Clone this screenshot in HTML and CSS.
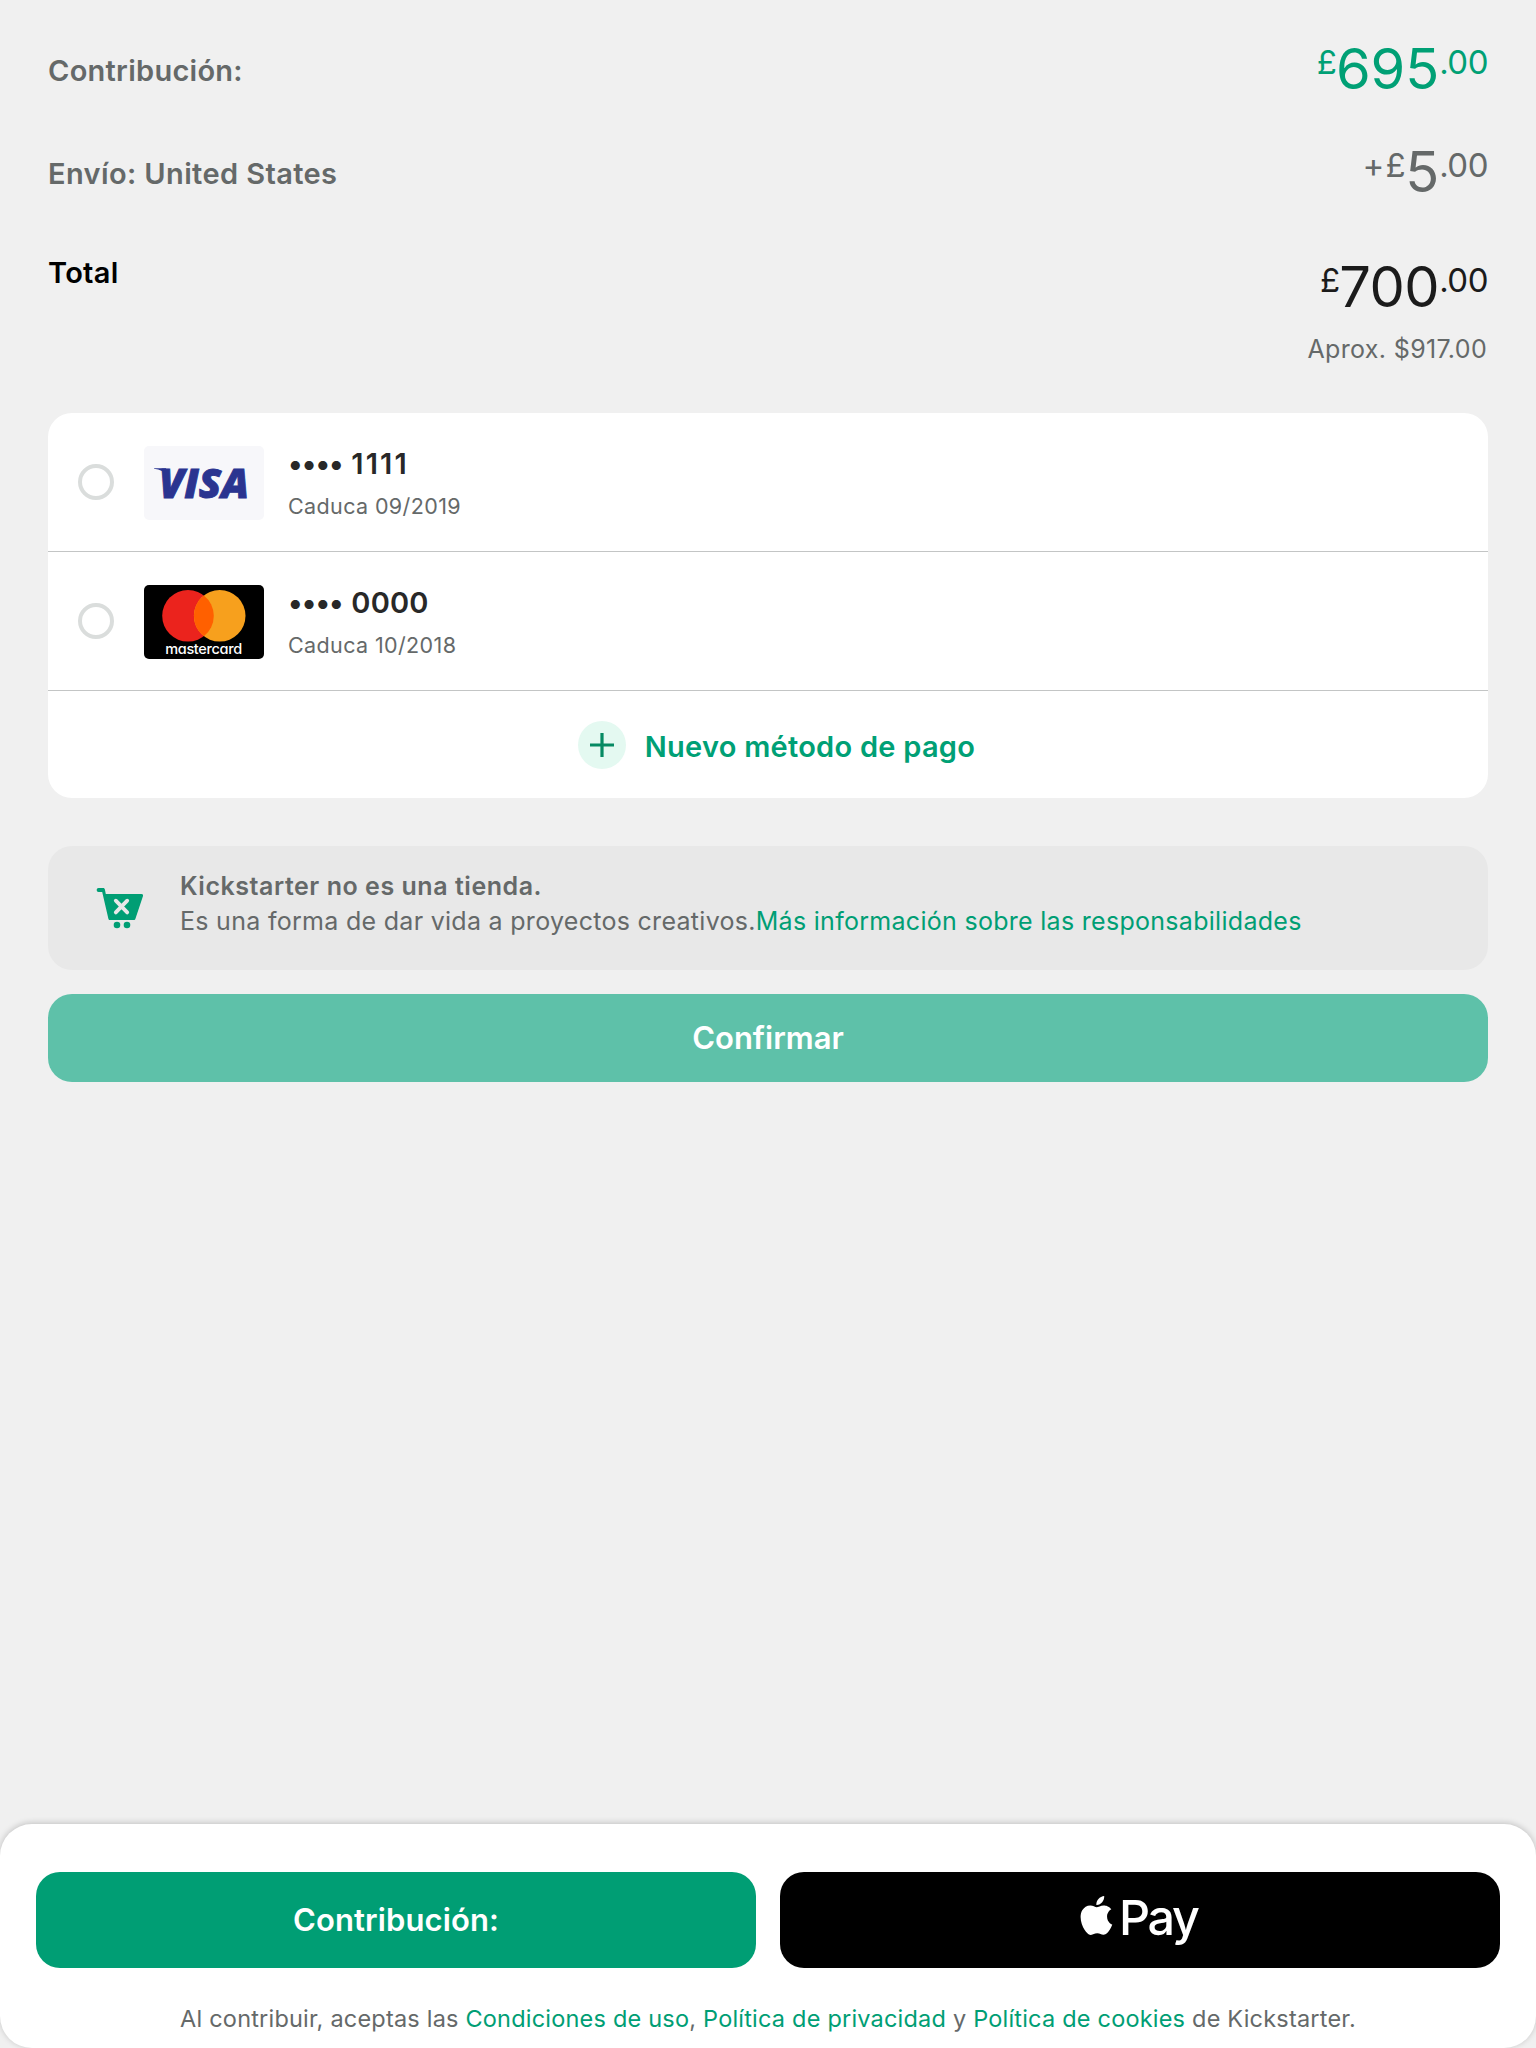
FILE: index.html
```html
<!DOCTYPE html>
<html lang="es">
<head>
<meta charset="utf-8">
<title>Contribución</title>
<link rel="stylesheet" href="styles.css">
</head>
<body>
<main class="checkout">
  <section class="summary">
    <div class="summary-row">
      <span class="label">Contribución:</span>
      <span class="amount amount-green"><span class="minor symbol">£</span><span class="major">695</span><span class="minor cents">.00</span></span>
    </div>
    <div class="summary-row">
      <span class="label label-shipping">Envío: United States</span>
      <span class="amount amount-gray"><span class="minor symbol plus">+£</span><span class="major">5</span><span class="minor cents">.00</span></span>
    </div>
    <div class="summary-row total-row">
      <span class="label label-total">Total</span>
      <div class="total">
        <span class="amount"><span class="minor symbol">£</span><span class="major major-tight">700</span><span class="minor cents">.00</span></span>
        <span class="approx">Aprox. $917.00</span>
      </div>
    </div>
  </section>

  <section class="methods">
    <div class="method">
      <span class="radio"></span>
      <svg class="logo" viewBox="0 0 120 74" role="img" aria-label="Visa">
        <rect width="120" height="74" rx="5" fill="#f7f7fa"/>
        <path d="M10 22.2H22L24 30C20.500 26 16 23.500 10 22.800Z" fill="#2a3490"/>
        <text class="visa" x="15" y="51.500" textLength="90" lengthAdjust="spacingAndGlyphs">VISA</text>
      </svg>
      <div class="info">
        <span class="number"><span class="dots">••••</span><span class="ones">1111</span></span>
        <span class="expiry">Caduca 09/2019</span>
      </div>
    </div>
    <div class="method">
      <span class="radio"></span>
      <svg class="logo" viewBox="0 0 120 74" role="img" aria-label="Mastercard">
        <rect width="120" height="74" rx="5" fill="#000"/>
        <circle cx="44" cy="30.800" r="25.800" fill="#eb231d"/>
        <circle cx="75.700" cy="30.800" r="25.800" fill="#f7a01d"/>
        <path d="M59.850 10.440A25.800 25.800 0 0 1 59.850 51.160A25.800 25.800 0 0 1 59.850 10.440Z" fill="#ff6000"/>
        <text class="mastercard" x="21.200" y="69" textLength="77">mastercard</text>
      </svg>
      <div class="info">
        <span class="number"><span class="dots">••••</span><span>0000</span></span>
        <span class="expiry">Caduca 10/2018</span>
      </div>
    </div>
    <div class="add-method">
      <svg class="plus-icon" viewBox="0 0 48 48">
        <circle cx="24" cy="24" r="24" fill="#e4f9f1"/>
        <path d="M24 12V36M12 24H36" stroke="#068a63" stroke-width="3.200"/>
      </svg>
      <span class="add-label">Nuevo método de pago</span>
    </div>
  </section>

  <section class="notice">
    <svg class="cart" viewBox="0 0 48 42">
      <path d="M2.600 1H7.200C8.200 1 8.700 1.600 8.900 2.500L9.800 7H45.500C46.700 7 47.300 7.800 47 9L39.500 31.500C39.200 32.600 38.700 33 37.800 33H14C13 33 12.600 32.600 12.400 31.700L6.200 5H2.600C1.400 5 .7 4.200 .7 3S1.400 1 2.600 1Z" fill="#009e74"/>
      <path d="M19.800 13.700L31.200 25.400M31.200 13.700L19.800 25.400" stroke="#e8e8e8" stroke-width="3.800" stroke-linecap="round"/>
      <circle cx="21" cy="38" r="3.300" fill="#009e74"/>
      <circle cx="31" cy="38" r="3.300" fill="#009e74"/>
    </svg>
    <div class="notice-text">
      <p class="notice-title">Kickstarter no es una tienda.</p>
      <p>Es una forma de dar vida a proyectos creativos.<a>Más información sobre las responsabilidades</a></p>
    </div>
  </section>

  <div class="button confirm">Confirmar</div>
</main>

<footer class="bottom-sheet">
  <div class="actions">
    <div class="button pledge">Contribución:</div>
    <div class="button apple-pay">
      <svg class="apple-pay-mark" viewBox="0 -6 120 64" role="img" aria-label="Apple Pay">
        <path transform="translate(-3 2) scale(1.62)" fill="#fff" d="M12.152 6.896c-.948 0-2.415-1.078-3.960-1.040-2.040.027-3.910 1.183-4.961 3.014-2.117 3.675-.546 9.103 1.519 12.090 1.013 1.454 2.208 3.090 3.792 3.039 1.520-.065 2.090-.987 3.935-.987 1.831 0 2.350.987 3.960.948 1.637-.026 2.676-1.480 3.676-2.948 1.156-1.688 1.636-3.325 1.662-3.415-.039-.013-3.182-1.221-3.220-4.857-.026-3.040 2.480-4.494 2.597-4.559-1.429-2.090-3.623-2.324-4.390-2.376-2-.156-3.675 1.090-4.610 1.090zM15.530 3.830c.843-1.012 1.400-2.427 1.245-3.830-1.207.052-2.662.805-3.532 1.818-.780.896-1.454 2.338-1.273 3.714 1.338.104 2.715-.688 3.559-1.701"/>
        <text class="pay" x="39" y="40.500">Pay</text>
      </svg>
    </div>
  </div>
  <p class="legal">Al contribuir, aceptas las <a>Condiciones de uso</a>, <a>Política de privacidad</a> y <a>Política de cookies</a> de Kickstarter.</p>
</footer>
</body>
</html>
```
FILE: styles.css
```css
* {
  box-sizing: border-box;
}

body {
  margin: 0;
  min-height: 2048px;
  display: flex;
  flex-direction: column;
  justify-content: space-between;
  background: #f0f0f0;
  color: #656969;
  font-family: Inter, "Liberation Sans", sans-serif;
}

p {
  margin: 0;
}

a {
  color: #009e74;
}

svg {
  display: block;
  flex: none;
}

.checkout {
  padding: 0 48px;
}

/* Amounts */
.summary-row {
  display: flex;
  justify-content: space-between;
  align-items: flex-start;
  height: 103px;
  padding-top: 37px;
}

.total-row {
  height: 207px;
  padding-top: 46px;
}

.label {
  margin-top: 14px;
  font-size: 29px;
  font-weight: 600;
  line-height: 40px;
  letter-spacing: 0.27px;
}

.label-shipping {
  letter-spacing: 0.38px;
}

.label-total {
  margin-top: 1px;
  color: #000;
}

.total {
  display: flex;
  flex-direction: column;
  align-items: flex-end;
  padding-top: 3px;
}

.amount {
  display: flex;
  align-items: flex-start;
  height: 64px;
  color: #1b1b1b;
}

.amount-green {
  color: #00a075;
}

.amount-gray {
  color: #656969;
}

.major {
  font-size: 56px;
  line-height: 64px;
  letter-spacing: -0.1px;
}

.major-tight {
  letter-spacing: -0.5px;
}

.minor {
  padding-top: 5px;
  font-size: 33px;
  line-height: 40px;
}

.symbol {
  margin-right: -1px;
}

.plus {
  letter-spacing: 1.1px;
  margin-right: -1.5px;
}

.cents {
  letter-spacing: -0.5px;
}

.approx {
  margin: 14px 1px 0 0;
  font-size: 25px;
  line-height: 32px;
  letter-spacing: 0.34px;
}

/* Payment methods */
.methods {
  border-radius: 24px;
  background: #fff;
}

.method {
  display: flex;
  align-items: center;
  height: 139px;
  padding: 0 30px;
  border-bottom: 1px solid #c3c5c5;
}

.radio {
  width: 36px;
  height: 36px;
  margin-right: 30px;
  border: 4px solid #dadddc;
  border-radius: 50%;
}

.logo {
  width: 120px;
  height: 74px;
  margin: 2px 24px 0 0;
}

.visa {
  fill: #2a3490;
  stroke: #2a3490;
  stroke-width: 0.9px;
  font: italic 800 40px "Open Sans", sans-serif;
}

.mastercard {
  fill: #fff;
  font: 500 14.5px Inter, sans-serif;
  font-feature-settings: "cv11";
}

.info {
  display: flex;
  flex-direction: column;
  gap: 10.5px;
  padding-top: 1.5px;
}

.number {
  color: #282828;
  font-size: 29px;
  font-weight: 600;
  line-height: 36px;
  letter-spacing: 0.2px;
}

.dots {
  margin-right: 8.5px;
  letter-spacing: -0.9px;
}

.ones {
  letter-spacing: 2.1px;
}

.expiry {
  font-size: 21.5px;
  line-height: 28px;
  letter-spacing: 0.38px;
}

.add-method {
  display: flex;
  align-items: center;
  justify-content: center;
  gap: 19px;
  height: 107px;
  padding-left: 17px;
}

.plus-icon {
  width: 48px;
  height: 48px;
}

.add-label {
  padding-top: 5px;
  color: #00a075;
  font-size: 29px;
  font-weight: 600;
  line-height: 40px;
  letter-spacing: 0.26px;
}

/* Notice */
.notice {
  display: flex;
  align-items: flex-start;
  gap: 36px;
  height: 124px;
  margin-top: 48px;
  padding: 23px 48px;
  border-radius: 24px;
  background: #e8e8e8;
}

.cart {
  width: 48px;
  height: 42px;
  margin-top: 18px;
}

.notice-text {
  font-size: 25px;
  line-height: 35px;
  letter-spacing: 0.29px;
}

.notice-title {
  font-weight: 600;
  letter-spacing: 0.54px;
}

/* Buttons */
.button {
  display: flex;
  align-items: center;
  justify-content: center;
  border-radius: 24px;
  color: #fff;
  font-size: 31px;
  font-weight: 600;
}

.confirm {
  height: 88px;
  margin-top: 24px;
  padding-bottom: 2px;
  background: #5ec1a9;
}

.bottom-sheet {
  height: 224px;
  padding: 48px 36px 0;
  border-radius: 32px;
  background: #fff;
  box-shadow: 0 -1px 6px rgba(0, 0, 0, 0.2);
}

.actions {
  display: grid;
  grid-template-columns: 1fr 1fr;
  gap: 24px;
}

.pledge,
.apple-pay {
  height: 96px;
}

.pledge {
  padding-bottom: 2px;
  background: #009e74;
  letter-spacing: 0.1px;
}

.apple-pay {
  background: #000;
}

.apple-pay-mark {
  width: 120px;
  height: 64px;
}

.pay {
  fill: #fff;
  font: 450 48.5px Inter, sans-serif;
  letter-spacing: -2.4px;
}

.legal {
  margin-top: 34.5px;
  font-size: 23.5px;
  line-height: 32px;
  letter-spacing: 0.204px;
  text-align: center;
}
```
